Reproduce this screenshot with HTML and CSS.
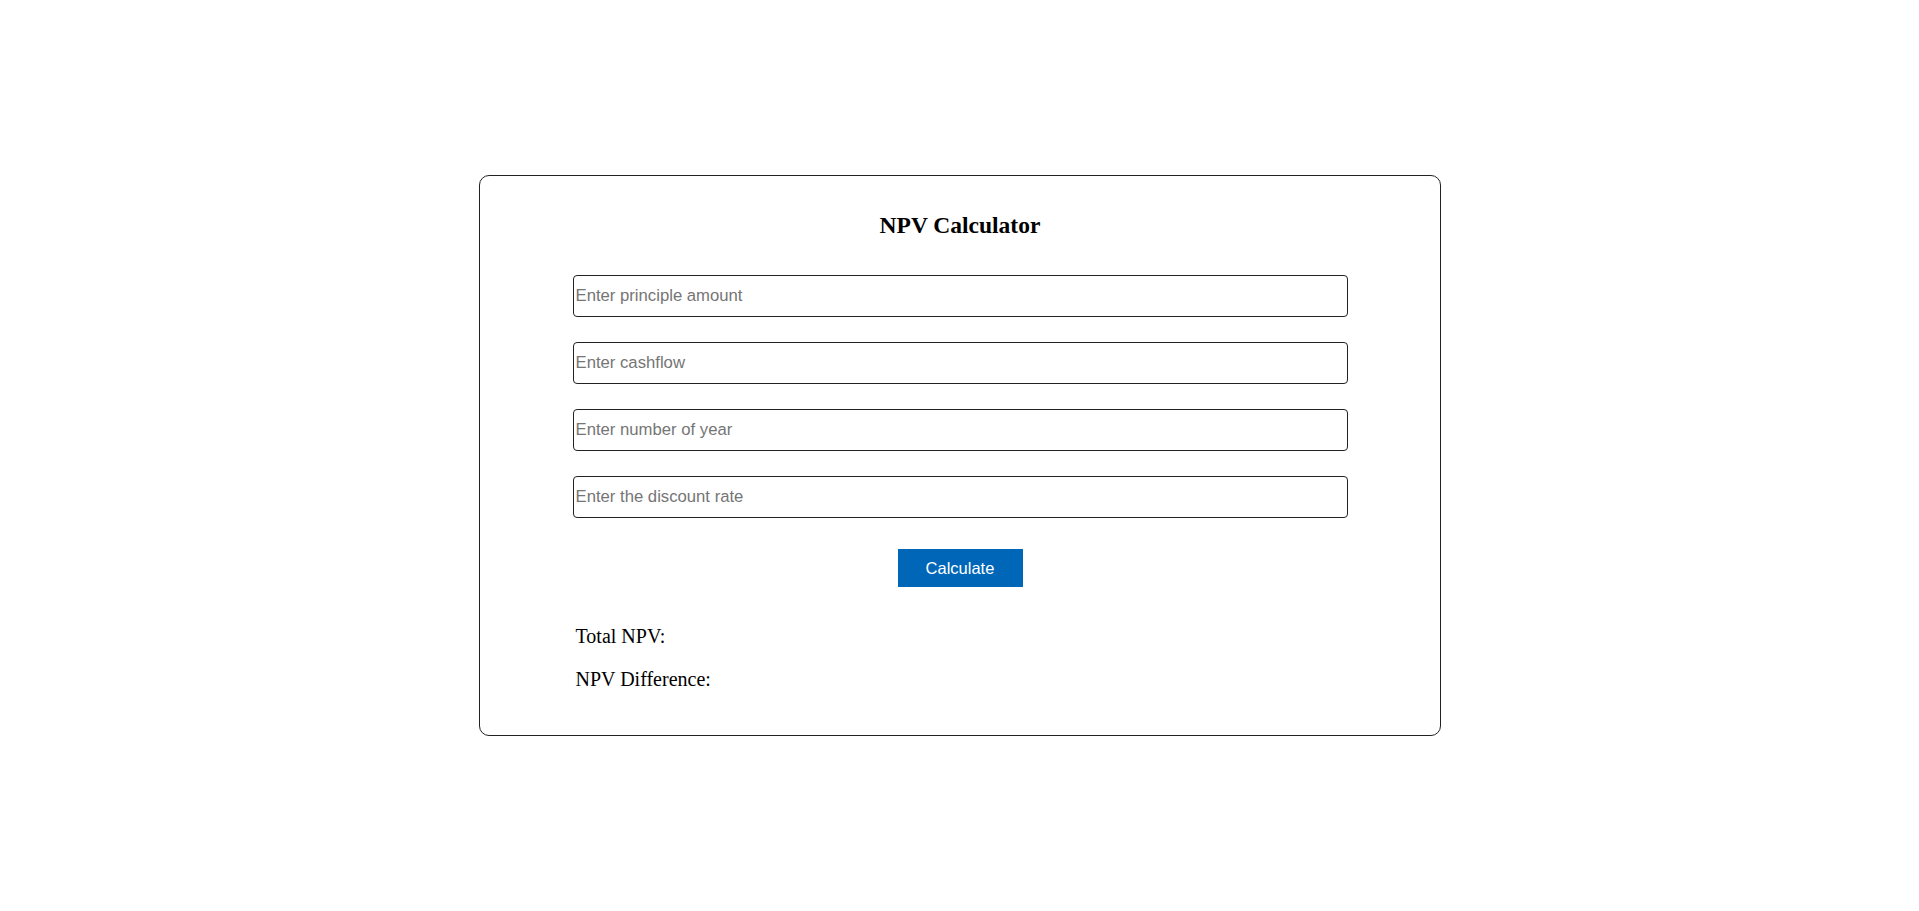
FILE: index.html
```html
<!DOCTYPE html>
<html lang="en">
<head>
<meta charset="utf-8">
<title>NPV Calculator</title>
<link rel="stylesheet" href="styles.css">
</head>
<body>
  <main class="page">
    <section class="card">
      <h2 class="title">NPV Calculator</h2>
      <div class="form">
        <input class="field" type="text" placeholder="Enter principle amount">
        <input class="field" type="text" placeholder="Enter cashflow">
        <input class="field" type="text" placeholder="Enter number of year">
        <input class="field" type="text" placeholder="Enter the discount rate">
        <button class="btn" type="button">Calculate</button>
        <div class="results">
          <p class="result">Total NPV:</p>
          <p class="result">NPV Difference:</p>
        </div>
      </div>
    </section>
  </main>
</body>
</html>
```
FILE: styles.css
```css
html, body {
  margin: 0;
  padding: 0;
  background: #ffffff;
}

.page {
  box-sizing: border-box;
  min-height: 911px;
  padding-left: 1px;
  display: flex;
  align-items: center;
  justify-content: center;
  font-family: "Liberation Serif", "Times New Roman", serif;
  color: #000;
}

.card {
  box-sizing: border-box;
  width: 962px;
  height: 561px;
  border: 1px solid #222;
  border-radius: 10px;
  padding: 35px 0 0 0;
  display: flex;
  flex-direction: column;
  align-items: center;
}

.title {
  margin: 0;
  font-size: 23.5px;
  line-height: 28px;
  font-weight: bold;
  text-align: center;
}

.form {
  width: 775px;
  margin-top: 36px;
  display: flex;
  flex-direction: column;
  align-items: center;
}

.field {
  box-sizing: border-box;
  width: 775px;
  height: 42px;
  margin: 0 0 25px 0;
  padding: 0 2px;
  border: 1px solid #222;
  border-radius: 4px;
  font-family: "Liberation Sans", Arial, sans-serif;
  font-size: 16.7px;
  color: #000;
  background: #fff;
  outline: none;
}

.field::placeholder {
  color: #757575;
}

.field:last-of-type {
  margin-bottom: 31px;
}

.btn {
  box-sizing: border-box;
  width: 125px;
  height: 38px;
  border: none;
  background: #0066b8;
  color: #fff;
  font-family: "Liberation Sans", Arial, sans-serif;
  font-size: 16.5px;
  cursor: pointer;
}

.results {
  align-self: stretch;
  margin-top: 38px;
  display: flex;
  flex-direction: column;
  gap: 20px;
  padding-left: 3px;
}

.result {
  margin: 0;
  font-size: 20px;
  line-height: 23px;
}
```
